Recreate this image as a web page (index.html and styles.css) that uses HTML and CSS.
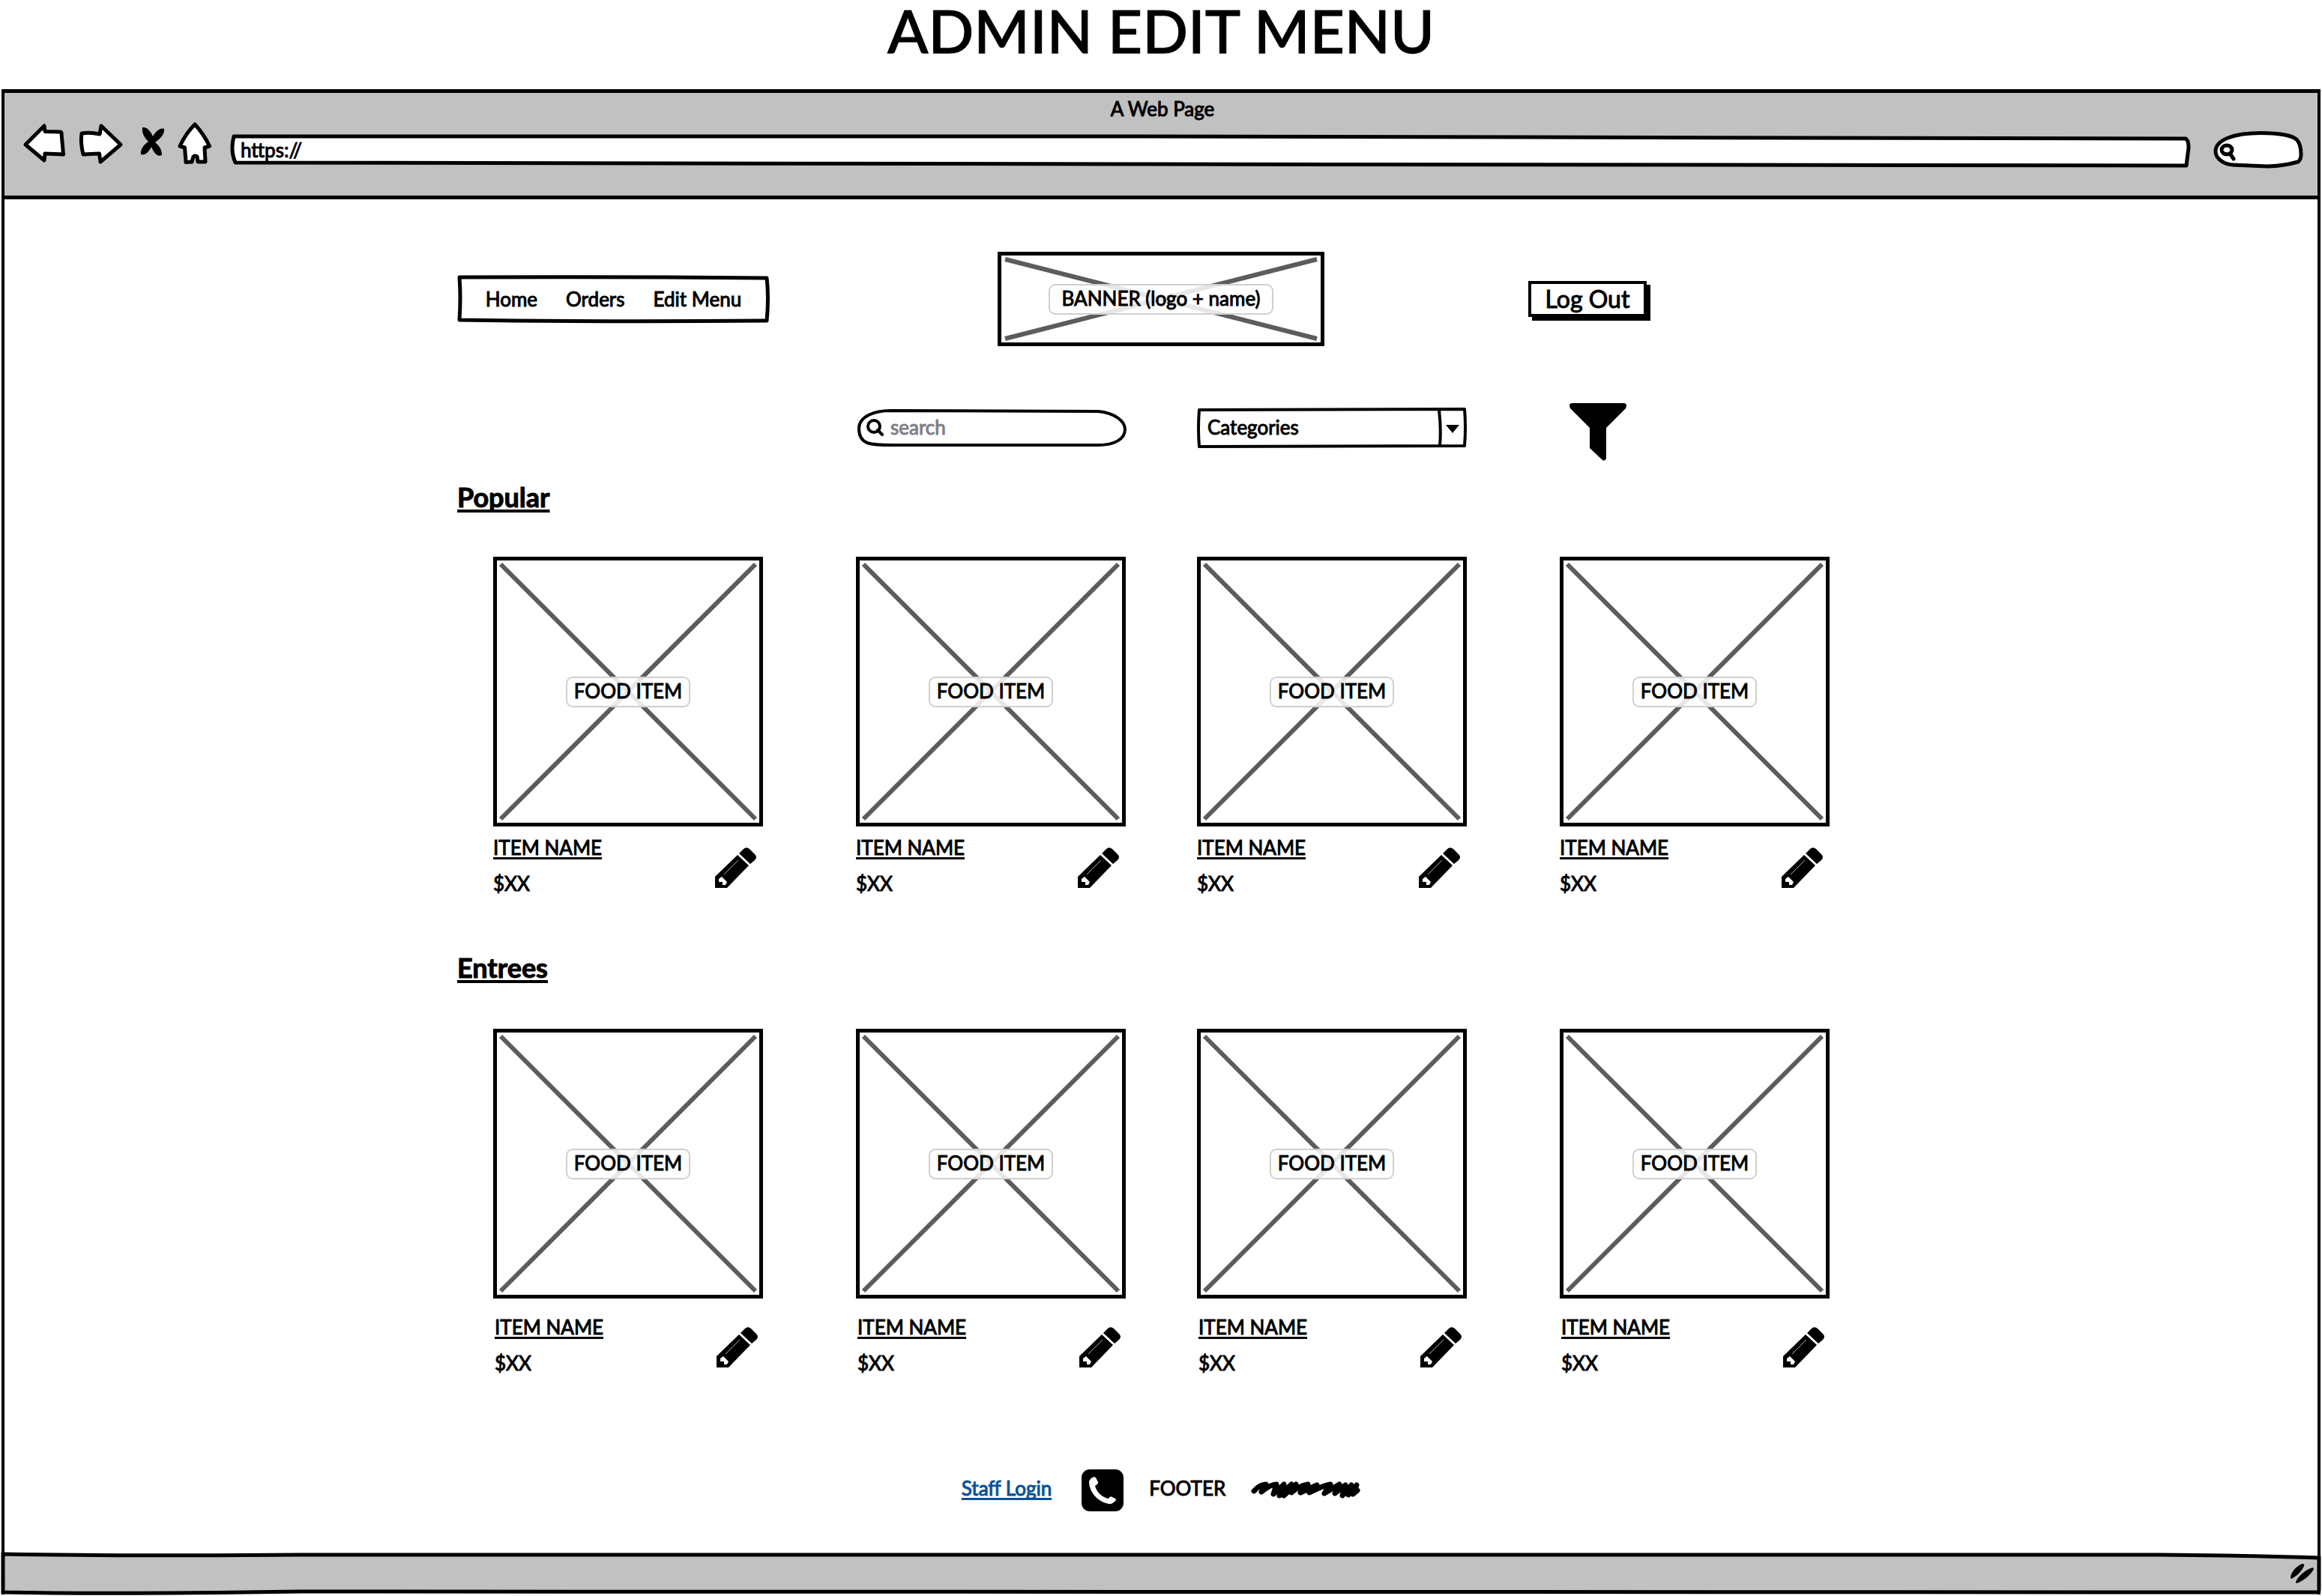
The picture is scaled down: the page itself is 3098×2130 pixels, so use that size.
FILE: index.html
```html
<!DOCTYPE html>
<html lang="en">
<head>
<meta charset="utf-8">
<meta name="viewport" content="width=device-width, initial-scale=1">
<title>Admin Edit Menu</title>
<link rel="stylesheet" href="styles.css">
</head>
<body>
<svg class="sprite" aria-hidden="true">
  <symbol id="cross" viewBox="0 0 100 100" preserveAspectRatio="none" overflow="visible">
    <path class="cross-line" d="M0 0L100 100M100 0L0 100"/>
  </symbol>
  <symbol id="pencil" viewBox="0 0 56 56">
    <path d="M0 54V39L30 10L45 24L16 54Z"/>
    <path d="M32 8L37 3Q41 -2 46 2L53 9Q57 13 53 17L47 22Z"/>
    <path fill="#fff" d="M5 42L9 39L16 46L14 50H10V46H5Z"/>
    <path fill="none" stroke="#aaa" d="M31 17L12 36"/>
  </symbol>
  <symbol id="lens" viewBox="0 0 24 24">
    <ellipse cx="10" cy="11" rx="8" ry="8" fill="none" stroke="#000" stroke-width="4"/>
    <path fill="none" stroke="#000" stroke-width="4" stroke-linecap="round" d="M15 16L21 22"/>
  </symbol>
</svg>

<h1 class="page-title">ADMIN EDIT MENU</h1>

<div class="browser">
  <div class="chrome">
    <p class="chrome-title">A Web Page</p>
    <div class="toolbar">
      <div class="history">
        <button class="icon-button" type="button" aria-label="Back">
          <svg class="sketch" width="68" height="64" viewBox="27 161 68 64"><path d="M34 193L59 168L60 175.500L80 176Q82 176 82 178L84.500 206L60 205L59 214Z"/></svg>
        </button>
        <button class="icon-button" type="button" aria-label="Forward">
          <svg class="sketch" width="72" height="64" viewBox="103 161 72 64"><path d="M109 178Q120 176 133 179L135 168L161 193L134 216L132.500 205L111 206Q107 190 109 178Z"/></svg>
        </button>
        <button class="icon-button" type="button" aria-label="Stop">
          <svg width="42" height="64" viewBox="183 161 42 64"><path d="M190 170C196 169 201 175 204 182C208 175 214 170 219 172C220 179 214 185 207 190C213 195 216 200 216 207C209 210 205 203 202 196C199 202 194 208 188 206C187 199 192 193 198 189C192 183 189 177 190 170Z"/></svg>
        </button>
        <button class="icon-button" type="button" aria-label="Home">
          <svg class="sketch" width="56" height="64" viewBox="233 161 56 64"><path d="M260 166Q272 179 279.500 195L273 197L274 216H264L263 209Q260 207 258 209L256 216L248 216.500L246.500 197L240 195Q248 178 260 166Z"/></svg>
        </button>
      </div>
      <label class="address">
        <svg class="backdrop sketch" viewBox="0 0 2622 46" preserveAspectRatio="none" aria-hidden="true"><path d="M7 3L1200 3L2611 6Q2615 8 2615 18L2612 42L1200 40L9 38Q2 22 7 3Z"/></svg>
        <input class="field-input" type="text" value="https://" aria-label="Address">
      </label>
      <button class="icon-button" type="button" aria-label="Search the web">
        <svg class="sketch" width="132" height="50" viewBox="2943 175 132 50"><path d="M2980 220C2968 220 2956 212 2956 202C2956 186 2982 177.500 3016 177.500C3040 177.500 3058 181 3064 186C3069 191 3070 198 3070 206Q3070 213 3066 216C3055 219 3040 222 3025 222Q3000 221 2978 220"/><ellipse cx="2971" cy="200" rx="7" ry="6"/><path d="M2976 206L2980 212"/></svg>
      </button>
    </div>
  </div>

  <div class="viewport">
    <header class="site-header">
      <nav class="site-nav">
        <svg class="backdrop sketch" viewBox="0 0 417 64" preserveAspectRatio="none" aria-hidden="true"><path d="M3 3Q200 2 413 4Q416 30 413 61Q200 63 3 60Q5 30 3 3Z"/></svg>
        <a href="#">Home</a>
        <a href="#">Orders</a>
        <a href="#">Edit Menu</a>
      </nav>
      <div class="picture banner">
        <svg class="cross"><use href="#cross"/></svg>
        <span class="picture-label">BANNER (logo + name)</span>
      </div>
      <button class="logout" type="button">Log Out</button>
    </header>

    <form class="filters">
      <label class="field field-search">
        <svg class="backdrop sketch thin" viewBox="0 0 360 54" preserveAspectRatio="none" aria-hidden="true"><path d="M46 4L323 5C345 7 359 18 359 29C359 42 345 50 323 50L50 50C20 50 4 50 4 28C4 12 24 4 46 4Z"/></svg>
        <svg class="lens"><use href="#lens"/></svg>
        <input class="field-input" type="text" placeholder="search" aria-label="Search the menu">
      </label>
      <label class="field field-select">
        <svg class="backdrop sketch thin" viewBox="0 0 360 54" preserveAspectRatio="none" aria-hidden="true"><path d="M3 3L357 2Q359 26 357 51L3 52Q1 28 3 3ZM323 3Q326 30 324 51"/><path class="solid" d="M332 23H350L341 34Z"/></svg>
        <select class="field-input" aria-label="Category"><option>Categories</option></select>
      </label>
      <button class="icon-button filter-button" type="button" aria-label="Filter">
        <svg width="78" height="78" viewBox="0 0 78 78"><path d="M2 8Q-1 1 5 1H73Q79 1 76 8L50 34V74Q49 79 45 77L28 61V34Z"/></svg>
      </button>
    </form>

    <section class="menu-section">
      <h2>Popular</h2>
      <div class="cards">
        <article class="card">
          <div class="picture"><svg class="cross"><use href="#cross"/></svg><span class="picture-label">FOOD ITEM</span></div>
          <div class="caption"><div class="details"><a href="#">ITEM NAME</a><span>$XX</span></div><button class="icon-button edit" type="button" aria-label="Edit item"><svg width="56" height="56"><use href="#pencil"/></svg></button></div>
        </article>
        <article class="card">
          <div class="picture"><svg class="cross"><use href="#cross"/></svg><span class="picture-label">FOOD ITEM</span></div>
          <div class="caption"><div class="details"><a href="#">ITEM NAME</a><span>$XX</span></div><button class="icon-button edit" type="button" aria-label="Edit item"><svg width="56" height="56"><use href="#pencil"/></svg></button></div>
        </article>
        <article class="card">
          <div class="picture"><svg class="cross"><use href="#cross"/></svg><span class="picture-label">FOOD ITEM</span></div>
          <div class="caption"><div class="details"><a href="#">ITEM NAME</a><span>$XX</span></div><button class="icon-button edit" type="button" aria-label="Edit item"><svg width="56" height="56"><use href="#pencil"/></svg></button></div>
        </article>
        <article class="card">
          <div class="picture"><svg class="cross"><use href="#cross"/></svg><span class="picture-label">FOOD ITEM</span></div>
          <div class="caption"><div class="details"><a href="#">ITEM NAME</a><span>$XX</span></div><button class="icon-button edit" type="button" aria-label="Edit item"><svg width="56" height="56"><use href="#pencil"/></svg></button></div>
        </article>
      </div>
    </section>

    <section class="menu-section entrees">
      <h2>Entrees</h2>
      <div class="cards">
        <article class="card">
          <div class="picture"><svg class="cross"><use href="#cross"/></svg><span class="picture-label">FOOD ITEM</span></div>
          <div class="caption"><div class="details"><a href="#">ITEM NAME</a><span>$XX</span></div><button class="icon-button edit" type="button" aria-label="Edit item"><svg width="56" height="56"><use href="#pencil"/></svg></button></div>
        </article>
        <article class="card">
          <div class="picture"><svg class="cross"><use href="#cross"/></svg><span class="picture-label">FOOD ITEM</span></div>
          <div class="caption"><div class="details"><a href="#">ITEM NAME</a><span>$XX</span></div><button class="icon-button edit" type="button" aria-label="Edit item"><svg width="56" height="56"><use href="#pencil"/></svg></button></div>
        </article>
        <article class="card">
          <div class="picture"><svg class="cross"><use href="#cross"/></svg><span class="picture-label">FOOD ITEM</span></div>
          <div class="caption"><div class="details"><a href="#">ITEM NAME</a><span>$XX</span></div><button class="icon-button edit" type="button" aria-label="Edit item"><svg width="56" height="56"><use href="#pencil"/></svg></button></div>
        </article>
        <article class="card">
          <div class="picture"><svg class="cross"><use href="#cross"/></svg><span class="picture-label">FOOD ITEM</span></div>
          <div class="caption"><div class="details"><a href="#">ITEM NAME</a><span>$XX</span></div><button class="icon-button edit" type="button" aria-label="Edit item"><svg width="56" height="56"><use href="#pencil"/></svg></button></div>
        </article>
      </div>
    </section>

    <footer class="site-footer">
      <a class="staff" href="#">Staff Login</a>
      <svg width="56" height="56" viewBox="0 0 56 56" aria-hidden="true"><rect width="56" height="56" rx="11"/><path fill="#fff" d="M10 16Q12 11 17 10Q19 10 20 13L22 17Q23 19 18 22C20 30 28 38 36 39Q38 35 41 37L45 39Q47 40 45 42Q41 47 36 46C22 43 10 31 10 16Z"/></svg>
      <span class="footer-text">FOOTER</span>
      <svg width="146" height="24" viewBox="0 0 146 24" aria-hidden="true"><path class="scribble" d="M4 13Q12 4 20 4L14 14Q26 4 34 4L30 17L44 4L38 19L54 4L44 19L60 4L54 15Q64 6 76 4L66 15L88 5L78 15Q95 6 106 4L98 16L118 4L112 16L126 5L122 19L134 5L130 18L141 5L136 17L142 12"/></svg>
    </footer>
  </div>

  <div class="status-bar">
    <svg class="backdrop" viewBox="0 0 3094 56" preserveAspectRatio="none" aria-hidden="true"><path class="status-shape" d="M2 2Q150 5 400 3L2880 3Q2990 4 3092 7V50Q3092 53 3089 53L400 52Q150 56 2 53Z"/></svg>
    <svg class="grip" width="34" height="28" viewBox="0 0 34 28" aria-hidden="true"><path d="M1 20C1 12 10 3 17 1Q20 1 19 4C16 11 9 18 2 21ZM8 26C10 18 22 8 31 6L32 8C28 16 18 24 9 27Z"/></svg>
  </div>
</div>
</body>
</html>
```
FILE: styles.css
```css
* {
  box-sizing: border-box;
}

body {
  margin: 0;
  background: #fff;
  color: #000;
  font: 400 26px/32px Lato, "Open Sans", sans-serif;
  -webkit-text-stroke: 1px currentColor;
}

h1,
h2,
p {
  margin: 0;
}

a {
  color: inherit;
}

svg {
  display: block;
}

.sprite {
  position: absolute;
  width: 0;
  height: 0;
}

.page-title {
  padding-bottom: 39px;
  font-size: 80px;
  line-height: 80px;
  font-weight: 500;
  text-align: center;
}

/* Shared hand-drawn pieces */

.backdrop {
  position: absolute;
  inset: 0;
  z-index: -1;
  width: 100%;
  height: 100%;
  overflow: visible;
}

.sketch path,
.sketch ellipse {
  fill: #fff;
  stroke: #000;
  stroke-width: 5px;
  stroke-linejoin: round;
  stroke-linecap: round;
  vector-effect: non-scaling-stroke;
}

.sketch.thin path {
  stroke-width: 4px;
}

.sketch .solid {
  fill: #000;
  stroke: none;
}

.icon-button {
  padding: 0;
  border: 0;
  background: none;
  color: inherit;
}

.field-input {
  width: 100%;
  padding: 0;
  border: 0;
  outline: 0;
  appearance: none;
  background: none;
  color: inherit;
  font: inherit;
}

.field-input::placeholder {
  color: #807f88;
  opacity: 1;
}

/* Browser window */

.browser {
  margin: 0 2px;
  border: solid #000;
  border-width: 5px 4px 0;
}

.chrome {
  padding: 5px 17px 36px 21px;
  border-bottom: 5px solid #000;
  background: #c1c1c1;
}

.chrome-title {
  text-align: center;
}

.toolbar {
  display: flex;
  align-items: flex-end;
  gap: 16px;
}

.history {
  display: flex;
  gap: 8px;
}

.address {
  position: relative;
  z-index: 0;
  flex: 1;
  padding: 5px 16px 9px;
}

.address .field-input {
  display: block;
  height: 32px;
}

.viewport {
  max-width: 1878px;
  margin: 0 auto;
  padding: 70px 0 55px;
}

/* Header */

.site-header {
  display: grid;
  grid-template-columns: 1fr 436px 1fr;
  align-items: center;
}

.site-nav {
  position: relative;
  z-index: 0;
  display: flex;
  justify-content: center;
  gap: 38px;
  width: 417px;
  padding: 16px 0;
}

.site-nav a {
  text-decoration: none;
}

.picture {
  position: relative;
  display: grid;
  grid-template-rows: minmax(0, 1fr);
  place-items: center;
  height: 360px;
  padding: 5px;
  border: 5px solid #000;
}

.banner {
  height: 126px;
}

.cross {
  grid-area: 1 / 1;
  width: 100%;
  height: 100%;
  min-height: 0;
  overflow: visible;
}

.cross-line {
  fill: none;
  stroke: #5c5c5e;
  stroke-width: 6px;
  vector-effect: non-scaling-stroke;
}

.picture-label {
  z-index: 1;
  grid-area: 1 / 1;
  padding: 1px 9px 4px;
  border: 2px solid #cfcfcf;
  border-radius: 9px;
  background: rgba(255, 255, 255, 0.85);
}

.banner .picture-label {
  padding-right: 16px;
  padding-left: 16px;
}

.logout {
  width: 158px;
  margin-left: 272px;
  padding: 0;
  border: 4px solid #000;
  background: #fff;
  box-shadow: 5px 5px 0 #000;
  color: inherit;
  font: inherit;
  font-size: 32px;
  line-height: 40px;
}

/* Filters and menu share the same columns */

.filters,
.cards {
  display: grid;
  grid-template-columns: 484px 455px 484px 360px;
  padding-left: 48px;
}

.filters {
  align-items: start;
  margin-top: 75px;
}

.field {
  position: relative;
  z-index: 0;
  display: flex;
  align-items: center;
  gap: 8px;
  width: 360px;
  height: 54px;
  margin-top: 7px;
  padding: 0 14px 3px;
}

.field-search {
  grid-column: 2;
}

.lens {
  flex: none;
  width: 24px;
  height: 24px;
}

.filter-button {
  margin-left: 12px;
}

.menu-section {
  margin-top: 26px;
}

.menu-section h2 {
  margin-bottom: 58px;
  font-size: 36px;
  line-height: 44px;
  font-weight: 700;
  text-decoration: underline;
  text-decoration-thickness: 4px;
  text-decoration-skip-ink: none;
  text-underline-offset: 3px;
}

.card {
  width: 360px;
}

.caption {
  display: flex;
  justify-content: space-between;
  padding: 12px 8px 0 0;
}

.details {
  display: flex;
  flex-direction: column;
  gap: 16px;
}

.details a,
.staff {
  text-decoration-thickness: 3px;
  text-decoration-skip-ink: none;
  text-underline-offset: 3px;
}

.edit {
  align-self: flex-start;
  margin-top: 16px;
}

.entrees {
  margin-top: 74px;
}

.entrees h2 {
  margin-bottom: 60px;
}

.entrees .caption {
  padding: 22px 6px 0 2px;
}

.site-footer {
  display: flex;
  justify-content: center;
  align-items: center;
  gap: 34px;
  margin-top: 126px;
}

.staff,
.footer-text {
  padding-bottom: 6px;
}

.staff {
  margin-right: 6px;
  color: #06529b;
}

.scribble {
  fill: none;
  stroke: #000;
  stroke-width: 7px;
  stroke-linecap: round;
  stroke-linejoin: round;
}

/* Status bar */

.status-bar {
  position: relative;
  z-index: 0;
  display: flex;
  justify-content: flex-end;
  align-items: center;
  height: 56px;
  margin: 0 -4px 2px;
  padding-right: 7px;
}

.status-shape {
  fill: #c1c1c1;
  stroke: #000;
  stroke-width: 5px;
  vector-effect: non-scaling-stroke;
}
```
